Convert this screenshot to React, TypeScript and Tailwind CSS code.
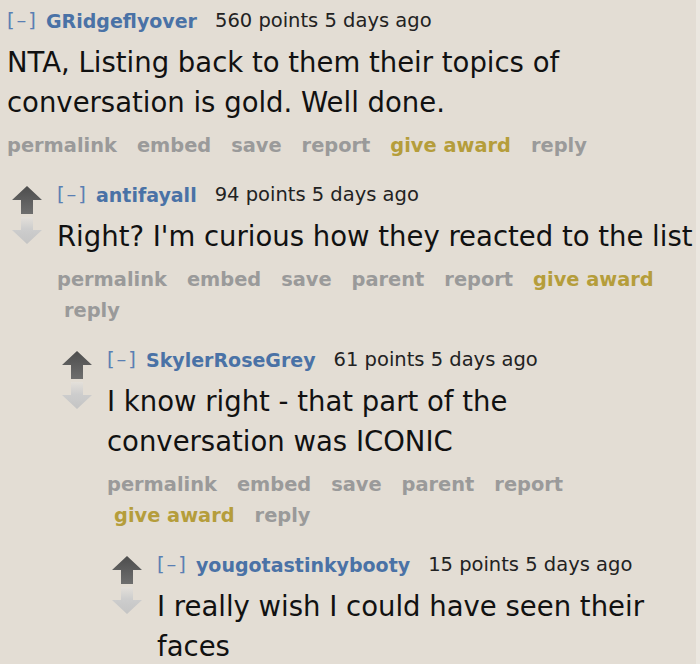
import React from "react";

type C = {
  user: string;
  points: string;
  lines: string[];
  actions: string[];
  children?: C[];
};

const data: C = {
  user: "GRidgeflyover",
  points: "560 points 5 days ago",
  lines: ["NTA, Listing back to them their topics of", "conversation is gold. Well done."],
  actions: ["permalink", "embed", "save", "report", "give award", "reply"],
  children: [
    {
      user: "antifayall",
      points: "94 points 5 days ago",
      lines: ["Right? I'm curious how they reacted to the list"],
      actions: ["permalink", "embed", "save", "parent", "report", "give award", "reply"],
      children: [
        {
          user: "SkylerRoseGrey",
          points: "61 points 5 days ago",
          lines: ["I know right - that part of the", "conversation was ICONIC"],
          actions: ["permalink", "embed", "save", "parent", "report", "give award", "reply"],
          children: [
            {
              user: "yougotastinkybooty",
              points: "15 points 5 days ago",
              lines: ["I really wish I could have seen their", "faces"],
              actions: [],
            },
          ],
        },
      ],
    },
  ],
};

function Arrows() {
  return (
    <svg width="30" height="58" viewBox="0 0 30 58">
      <defs>
        <linearGradient id="upg" x1="0" y1="0" x2="0" y2="1">
          <stop offset="0" stopColor="#4d4d4d" />
          <stop offset="1" stopColor="#6e6e6e" />
        </linearGradient>
        <linearGradient id="downg" x1="0" y1="0" x2="0" y2="1">
          <stop offset="0" stopColor="#e4e0da" />
          <stop offset="0.45" stopColor="#cdcdcd" />
          <stop offset="1" stopColor="#c4c4c4" />
        </linearGradient>
      </defs>
      <path d="M15 0 L30 14 L21 14 L21 28 L9 28 L9 14 L0 14 Z" fill="url(#upg)" />
      <path d="M9 31 L21 31 L21 44 L30 44 L15 58 L0 44 L9 44 Z" fill="url(#downg)" />
    </svg>
  );
}

function Comment({ c }: { c: C }) {
  return (
    <div className="flex">
      <div className="w-[50px] shrink-0 pl-[5px] pt-[4px]">
        <Arrows />
      </div>
      <div className="flex-1 min-w-0">
        <div className="flex items-center h-[26px] text-[19.5px] leading-[26px] whitespace-nowrap">
          <span className="text-[#5a7fb3] tracking-[2px]">[–]</span>
          <span className="ml-[8px] font-bold text-[19px] text-[#4a72a6]">{c.user}</span>
          <span className="ml-[18px] text-[#222]">{c.points}</span>
        </div>
        <div className="mt-[8px] text-[27.5px] leading-[40px] text-[#111] whitespace-nowrap">
          {c.lines.map((l, i) => (
            <div key={i}>{l}</div>
          ))}
        </div>
        {c.actions.length > 0 && (
          <div className="mt-[8px] flex flex-wrap gap-x-[6px] text-[19.4px] leading-[31px] font-bold">
            {c.actions.map((a, i) => (
              <span
                key={a}
                className={
                  (i === 0 ? "pr-[7px] " : "px-[7px] ") +
                  (a === "give award" ? "text-[#b59d3b]" : "text-[#9a9a9a]")
                }
              >
                {a}
              </span>
            ))}
          </div>
        )}
        {c.children && (
          <div className="mt-[21px]">
            {c.children.map((ch) => (
              <Comment key={ch.user} c={ch} />
            ))}
          </div>
        )}
      </div>
    </div>
  );
}

export default function App() {
  return (
    <div
      className="flex w-[700px] h-[664px] overflow-hidden bg-[#e3ddd4]"
      style={{ fontFamily: '"DejaVu Sans", Verdana, sans-serif' }}
    >
      <div className="w-[696px] h-[664px] overflow-hidden">
        <div className="w-[720px] ml-[-43px] pt-[8px]">
          <Comment c={data} />
        </div>
      </div>
      <div className="w-[4px] h-[664px] bg-[#ebe7e0]" />
    </div>
  );
}
